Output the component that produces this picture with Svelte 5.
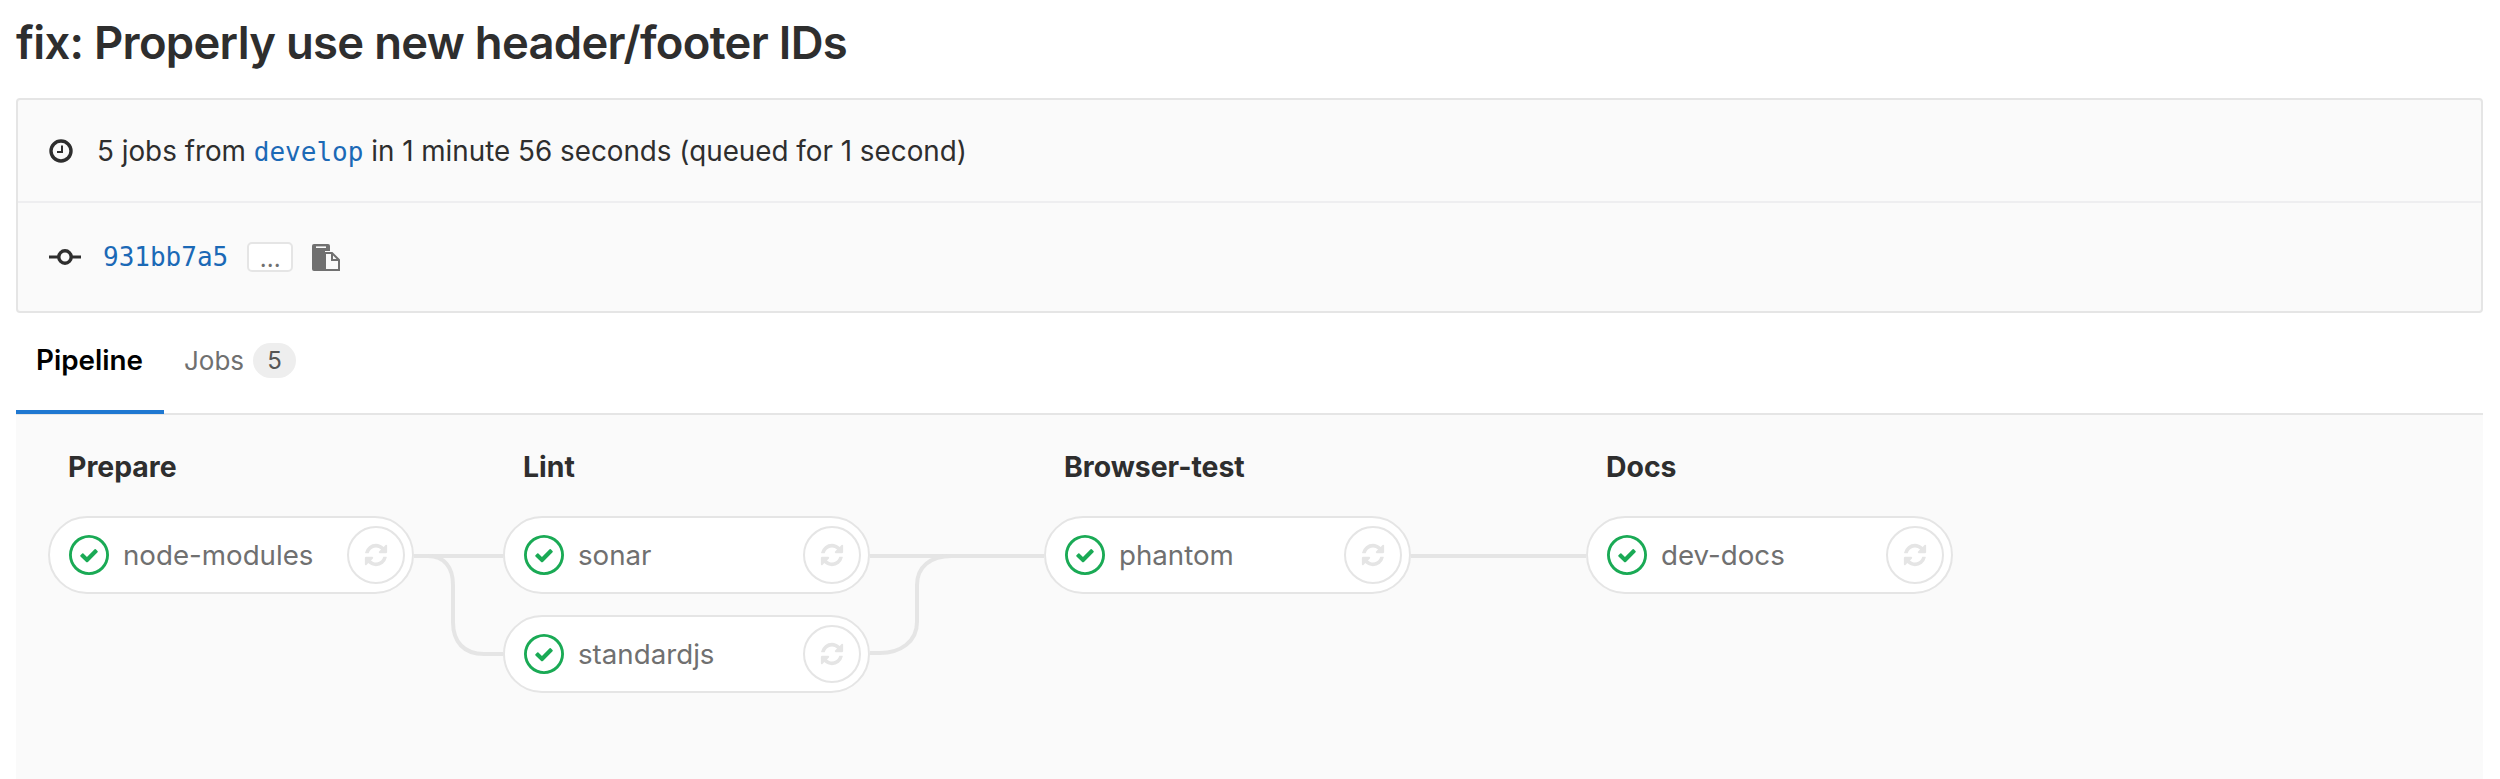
<script>
  const stages = [
    { title: 'Prepare', jobs: ['node-modules'], width: 366, after: { w: 89, h: 140, d: ['M0 39H89', 'M14 39C30 39 39 50 39 68V105C39 125 50 137 70 137H89'] } },
    { title: 'Lint', jobs: ['sonar', 'standardjs'], width: 367, after: { w: 174, h: 140, d: ['M0 39H174', 'M0 136H10C30 136 47 125 47 105V68C47 50 60 39 82 39'] } },
    { title: 'Browser-test', jobs: ['phantom'], width: 367, after: { w: 175, h: 80, d: ['M0 39H175'] } },
    { title: 'Docs', jobs: ['dev-docs'], width: 367 }
  ]
  const retry = 'M1639 1056q0 5-1 7-64 268-268 434.5t-478 166.5q-146 0-282.5-55t-243.5-157l-129 129q-19 19-45 19t-45-19-19-45v-448q0-26 19-45t45-19h448q26 0 45 19t19 45-19 45l-137 137q71 66 161 102t187 36q134 0 250-65t186-179q11-17 53-117 8-23 30-23h192q13 0 22.5 9.5t9.5 22.5zm25-800v448q0 26-19 45t-45 19h-448q-26 0-45-19t-19-45 19-45l138-138q-148-137-349-137-134 0-250 65t-186 179q-11 17-53 117-8 23-30 23h-199q-13 0-22.5-9.5t-9.5-22.5v-7q65-268 270-434.5t480-166.5q146 0 284 55.5t245 156.5l130-129q19-19 45-19t45 19 19 45z'
</script>

<main>
  <h1>fix: Properly use new header/footer IDs</h1>

  <section class="info">
    <div class="info-row first">
      <svg class="clock" viewBox="0 0 24 24" width="24" height="24">
        <circle cx="12" cy="12" r="10" fill="none" stroke="#2e2e2e" stroke-width="3.4" />
        <path d="M13 6.5V13H8" fill="none" stroke="#2e2e2e" stroke-width="2" />
      </svg>
      <span>5 jobs from <a class="mono" href="#top">develop</a> in 1 minute 56 seconds (queued for 1 second)</span>
    </div>
    <div class="info-row second">
      <svg class="commit" viewBox="0 0 32 16" width="32" height="16">
        <path d="M0 8H9M23 8H32" stroke="#2e2e2e" stroke-width="3" />
        <circle cx="16" cy="8" r="6.2" fill="none" stroke="#2e2e2e" stroke-width="3.4" />
      </svg>
      <a class="mono sha" href="#top">931bb7a5</a>
      <button class="dots">...</button>
      <svg class="copy" viewBox="0 0 28 27" width="28" height="27">
        <path d="M2 0H16Q18 0 18 2V7H13V27H2Q0 27 0 25V2Q0 0 2 0Z" fill="#707070" />
        <path d="M4 3.2H14" stroke="#fafafa" stroke-width="1.6" />
        <path d="M13 9H20L27 16V26H13Z" fill="#fafafa" stroke="#707070" stroke-width="2" />
        <path d="M20 9V16H27" fill="none" stroke="#707070" stroke-width="2" />
      </svg>
    </div>
  </section>

  <nav class="tabs">
    <div class="tab active">Pipeline</div>
    <div class="tab">Jobs <span class="badge">5</span></div>
  </nav>

  <section class="graph">
    {#each stages as stage}
      <div class="stage" style="width: {stage.width}px">
        <h2>{stage.title}</h2>
        {#each stage.jobs as job}
          <div class="job">
            <svg class="status" viewBox="0 0 14 14" width="40" height="40">
              <path fill-rule="evenodd" d="M0 7a7 7 0 1 1 14 0A7 7 0 0 1 0 7zM13 7A6 6 0 1 0 1 7a6 6 0 0 0 12 0z" />
              <path d="M6.278 7.697L5.045 6.464a.296.296 0 0 0-.42-.002l-.613.614a.298.298 0 0 0 .002.42l1.91 1.909a.5.5 0 0 0 .703.005l.265-.265L9.997 6.04a.291.291 0 0 0-.009-.408l-.614-.614a.29.29 0 0 0-.408-.009L6.278 7.697z" />
            </svg>
            <span class="name">{job}</span>
            <span class="retry">
              <svg viewBox="0 0 1792 1792" width="26" height="26"><path d={retry} /></svg>
            </span>
          </div>
        {/each}
      </div>
      {#if stage.after}
        <svg class="link" viewBox="0 0 {stage.after.w} {stage.after.h}" width={stage.after.w} height={stage.after.h}>
          {#each stage.after.d as d}
            <path {d} />
          {/each}
        </svg>
      {/if}
    {/each}
  </section>
</main>

<style>
  :global(body) {
    background: #fff;
    color: #2e2e2e;
    font-family: Inter, "Liberation Sans", sans-serif;
  }
  main {
    height: 779px;
    padding: 0 17px 0 16px;
    box-sizing: border-box;
    display: flex;
    flex-direction: column;
    overflow: hidden;
  }
  h1 {
    margin: 0;
    height: 98px;
    padding-top: 19px;
    box-sizing: border-box;
    font-size: 45.4px;
    line-height: 48px;
    font-weight: 600;
    letter-spacing: -0.7px;
    white-space: nowrap;
  }
  .info {
    height: 215px;
    box-sizing: border-box;
    background: #fafafa;
    border: 2px solid #e5e5e5;
    border-radius: 4px;
    font-size: 27.8px;
    display: flex;
    flex-direction: column;
  }
  .info-row {
    display: flex;
    align-items: center;
    padding-left: 31px;
  }
  .first {
    height: 103px;
    border-bottom: 2px solid #eeeef0;
    box-sizing: border-box;
  }
  .second {
    flex: 1;
  }
  .clock {
    margin-right: 24px;
  }
  .commit {
    margin-right: 22px;
  }
  .mono {
    font-family: "DejaVu Sans Mono", "Liberation Mono", monospace;
    font-size: 26px;
    color: #1b69b6;
    text-decoration: none;
  }
  .dots {
    margin-left: 19px;
    margin-right: 19px;
    width: 46px;
    height: 30px;
    padding: 0 0 6px;
    background: #fff;
    border: 2px solid #e5e5e5;
    border-radius: 5px;
    font: 24px Inter, sans-serif;
    color: #707070;
  }
  .tabs {
    display: flex;
    height: 102px;
    box-sizing: border-box;
    border-bottom: 2px solid #e5e5e5;
    font-size: 26px;
  }
  .tab {
    height: 100px;
    box-sizing: border-box;
    display: flex;
    align-items: center;
    padding: 0 20px 6px;
    color: #707070;
  }
  .active {
    width: 148px;
    font-size: 27.8px;
    font-weight: 600;
    color: #000;
    border-bottom: 4px solid #1f78d1;
    height: 101px;
    padding-bottom: 3px;
  }
  .badge {
    margin-left: 9px;
    width: 43px;
    height: 35px;
    border-radius: 18px;
    background: #eee;
    display: inline-flex;
    align-items: center;
    justify-content: center;
    font-size: 24px;
    color: #555;
  }
  .graph {
    flex: 1;
    background: #fafafa;
    display: flex;
    align-items: flex-start;
    padding: 37px 0 0 32px;
  }
  .stage {
    flex: none;
    display: flex;
    flex-direction: column;
  }
  h2 {
    margin: 0 0 34px 20px;
    font-size: 28.4px;
    line-height: 30px;
    font-weight: 700;
    white-space: nowrap;
  }
  .job {
    height: 78px;
    box-sizing: border-box;
    margin-bottom: 21px;
    display: flex;
    align-items: center;
    padding: 0 7px 0 19px;
    background: #fff;
    border: 2px solid #e5e5e5;
    border-radius: 39px;
  }
  .status {
    flex: none;
    fill: #1aaa55;
  }
  .name {
    flex: 1;
    margin-left: 14px;
    font-size: 27.7px;
    color: #707070;
  }
  .retry {
    flex: none;
    width: 58px;
    height: 58px;
    box-sizing: border-box;
    border: 2px solid #e5e5e5;
    border-radius: 50%;
    display: flex;
    align-items: center;
    justify-content: center;
  }
  .retry svg {
    fill: #e5e5e5;
  }
  .link {
    flex: none;
    margin-top: 65px;
  }
  .link path {
    fill: none;
    stroke: #e5e5e5;
    stroke-width: 4;
  }
</style>
